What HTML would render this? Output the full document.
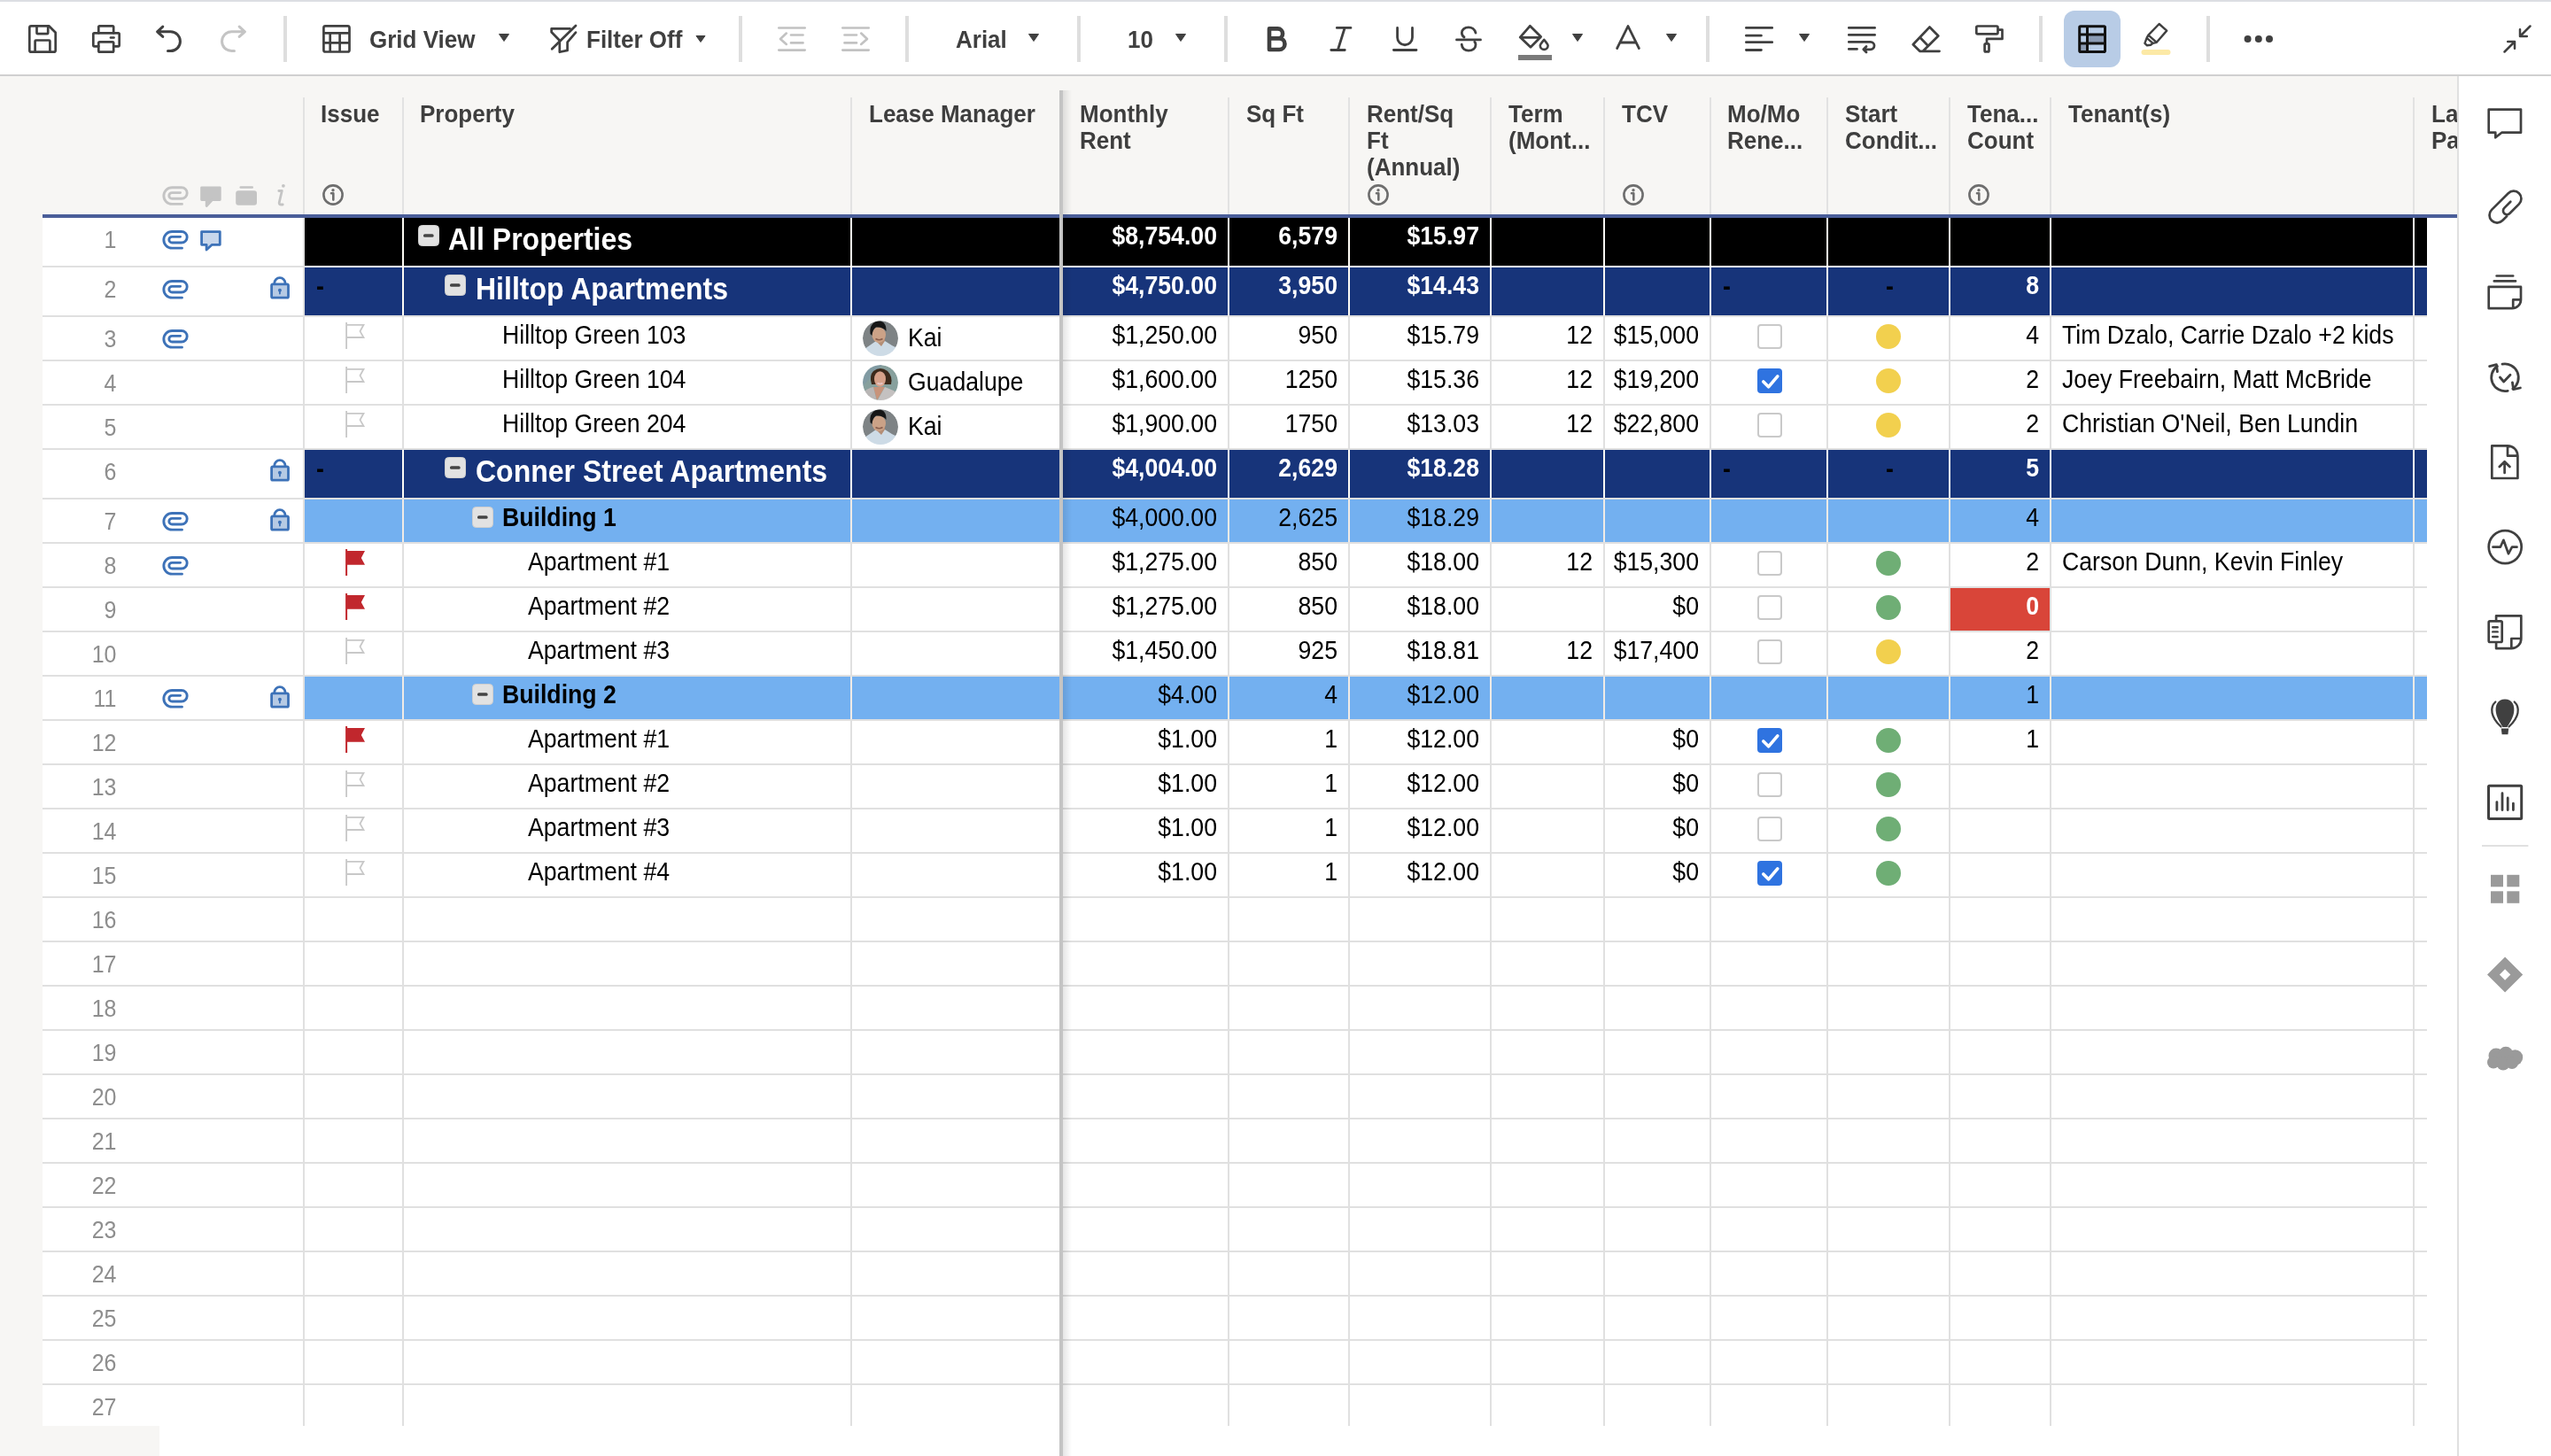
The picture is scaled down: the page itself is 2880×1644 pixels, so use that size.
<!DOCTYPE html>
<html><head><meta charset="utf-8"><style>
html,body{margin:0;padding:0;}
body{width:2880px;height:1644px;overflow:hidden;position:relative;background:#fff;font-family:"Liberation Sans", sans-serif;}
</style></head><body>
<div style="position:absolute;left:0px;top:0px;width:2880px;height:2px;background:#dcdee3;"></div><div style="position:absolute;left:0px;top:2px;width:2880px;height:82px;background:#ffffff;"></div><div style="position:absolute;left:0px;top:84px;width:2880px;height:2px;background:#d0d0d0;"></div><div style="position:absolute;left:0px;top:86px;width:2774px;height:156px;background:#f7f6f4;"></div><div style="position:absolute;left:0px;top:242px;width:48px;height:1402px;background:#f7f6f4;"></div><div style="position:absolute;left:0px;top:1610px;width:180px;height:34px;background:#f7f6f4;"></div><div style="position:absolute;left:2774px;top:86px;width:2px;height:1558px;background:#e0e0e0;"></div><div style="position:absolute;left:342px;top:110px;width:2px;height:132px;background:#e2e2e2;"></div><div style="position:absolute;left:454px;top:110px;width:2px;height:132px;background:#e2e2e2;"></div><div style="position:absolute;left:960px;top:110px;width:2px;height:132px;background:#e2e2e2;"></div><div style="position:absolute;left:1386px;top:110px;width:2px;height:132px;background:#e2e2e2;"></div><div style="position:absolute;left:1522px;top:110px;width:2px;height:132px;background:#e2e2e2;"></div><div style="position:absolute;left:1682px;top:110px;width:2px;height:132px;background:#e2e2e2;"></div><div style="position:absolute;left:1810px;top:110px;width:2px;height:132px;background:#e2e2e2;"></div><div style="position:absolute;left:1930px;top:110px;width:2px;height:132px;background:#e2e2e2;"></div><div style="position:absolute;left:2062px;top:110px;width:2px;height:132px;background:#e2e2e2;"></div><div style="position:absolute;left:2200px;top:110px;width:2px;height:132px;background:#e2e2e2;"></div><div style="position:absolute;left:2314px;top:110px;width:2px;height:132px;background:#e2e2e2;"></div><div style="position:absolute;left:2724px;top:110px;width:2px;height:132px;background:#e2e2e2;"></div><div style="position:absolute;left:48px;top:242px;width:2726px;height:4px;background:#4a5e99;"></div><div style="position:absolute;left:48px;top:246px;width:2692px;height:1364px;background:#ffffff;"></div><div style="position:absolute;left:48px;top:300px;width:2692px;height:2px;background:#e0e0e0;"></div><div style="position:absolute;left:48px;top:356px;width:2692px;height:2px;background:#e0e0e0;"></div><div style="position:absolute;left:48px;top:406px;width:2692px;height:2px;background:#e0e0e0;"></div><div style="position:absolute;left:48px;top:456px;width:2692px;height:2px;background:#e0e0e0;"></div><div style="position:absolute;left:48px;top:506px;width:2692px;height:2px;background:#e0e0e0;"></div><div style="position:absolute;left:48px;top:562px;width:2692px;height:2px;background:#e0e0e0;"></div><div style="position:absolute;left:48px;top:612px;width:2692px;height:2px;background:#e0e0e0;"></div><div style="position:absolute;left:48px;top:662px;width:2692px;height:2px;background:#e0e0e0;"></div><div style="position:absolute;left:48px;top:712px;width:2692px;height:2px;background:#e0e0e0;"></div><div style="position:absolute;left:48px;top:762px;width:2692px;height:2px;background:#e0e0e0;"></div><div style="position:absolute;left:48px;top:812px;width:2692px;height:2px;background:#e0e0e0;"></div><div style="position:absolute;left:48px;top:862px;width:2692px;height:2px;background:#e0e0e0;"></div><div style="position:absolute;left:48px;top:912px;width:2692px;height:2px;background:#e0e0e0;"></div><div style="position:absolute;left:48px;top:962px;width:2692px;height:2px;background:#e0e0e0;"></div><div style="position:absolute;left:48px;top:1012px;width:2692px;height:2px;background:#e0e0e0;"></div><div style="position:absolute;left:48px;top:1062px;width:2692px;height:2px;background:#e0e0e0;"></div><div style="position:absolute;left:48px;top:1112px;width:2692px;height:2px;background:#e0e0e0;"></div><div style="position:absolute;left:48px;top:1162px;width:2692px;height:2px;background:#e0e0e0;"></div><div style="position:absolute;left:48px;top:1212px;width:2692px;height:2px;background:#e0e0e0;"></div><div style="position:absolute;left:48px;top:1262px;width:2692px;height:2px;background:#e0e0e0;"></div><div style="position:absolute;left:48px;top:1312px;width:2692px;height:2px;background:#e0e0e0;"></div><div style="position:absolute;left:48px;top:1362px;width:2692px;height:2px;background:#e0e0e0;"></div><div style="position:absolute;left:48px;top:1412px;width:2692px;height:2px;background:#e0e0e0;"></div><div style="position:absolute;left:48px;top:1462px;width:2692px;height:2px;background:#e0e0e0;"></div><div style="position:absolute;left:48px;top:1512px;width:2692px;height:2px;background:#e0e0e0;"></div><div style="position:absolute;left:48px;top:1562px;width:2692px;height:2px;background:#e0e0e0;"></div><div style="position:absolute;left:342px;top:246px;width:2px;height:1364px;background:#e0e0e0;"></div><div style="position:absolute;left:454px;top:246px;width:2px;height:1364px;background:#e0e0e0;"></div><div style="position:absolute;left:960px;top:246px;width:2px;height:1364px;background:#e0e0e0;"></div><div style="position:absolute;left:1386px;top:246px;width:2px;height:1364px;background:#e0e0e0;"></div><div style="position:absolute;left:1522px;top:246px;width:2px;height:1364px;background:#e0e0e0;"></div><div style="position:absolute;left:1682px;top:246px;width:2px;height:1364px;background:#e0e0e0;"></div><div style="position:absolute;left:1810px;top:246px;width:2px;height:1364px;background:#e0e0e0;"></div><div style="position:absolute;left:1930px;top:246px;width:2px;height:1364px;background:#e0e0e0;"></div><div style="position:absolute;left:2062px;top:246px;width:2px;height:1364px;background:#e0e0e0;"></div><div style="position:absolute;left:2200px;top:246px;width:2px;height:1364px;background:#e0e0e0;"></div><div style="position:absolute;left:2314px;top:246px;width:2px;height:1364px;background:#e0e0e0;"></div><div style="position:absolute;left:2724px;top:246px;width:2px;height:1364px;background:#e0e0e0;"></div><div style="position:absolute;left:344px;top:246px;width:2396px;height:54px;background:#000000;"></div><div style="position:absolute;left:454px;top:246px;width:2px;height:54px;background:#fdfbf5;"></div><div style="position:absolute;left:960px;top:246px;width:2px;height:54px;background:#fdfbf5;"></div><div style="position:absolute;left:1386px;top:246px;width:2px;height:54px;background:#fdfbf5;"></div><div style="position:absolute;left:1522px;top:246px;width:2px;height:54px;background:#fdfbf5;"></div><div style="position:absolute;left:1682px;top:246px;width:2px;height:54px;background:#fdfbf5;"></div><div style="position:absolute;left:1810px;top:246px;width:2px;height:54px;background:#fdfbf5;"></div><div style="position:absolute;left:1930px;top:246px;width:2px;height:54px;background:#fdfbf5;"></div><div style="position:absolute;left:2062px;top:246px;width:2px;height:54px;background:#fdfbf5;"></div><div style="position:absolute;left:2200px;top:246px;width:2px;height:54px;background:#fdfbf5;"></div><div style="position:absolute;left:2314px;top:246px;width:2px;height:54px;background:#fdfbf5;"></div><div style="position:absolute;left:2724px;top:246px;width:2px;height:54px;background:#fdfbf5;"></div><div style="position:absolute;left:344px;top:302px;width:2396px;height:54px;background:#17347a;"></div><div style="position:absolute;left:454px;top:302px;width:2px;height:54px;background:#fdfbf5;"></div><div style="position:absolute;left:960px;top:302px;width:2px;height:54px;background:#fdfbf5;"></div><div style="position:absolute;left:1386px;top:302px;width:2px;height:54px;background:#fdfbf5;"></div><div style="position:absolute;left:1522px;top:302px;width:2px;height:54px;background:#fdfbf5;"></div><div style="position:absolute;left:1682px;top:302px;width:2px;height:54px;background:#fdfbf5;"></div><div style="position:absolute;left:1810px;top:302px;width:2px;height:54px;background:#fdfbf5;"></div><div style="position:absolute;left:1930px;top:302px;width:2px;height:54px;background:#fdfbf5;"></div><div style="position:absolute;left:2062px;top:302px;width:2px;height:54px;background:#fdfbf5;"></div><div style="position:absolute;left:2200px;top:302px;width:2px;height:54px;background:#fdfbf5;"></div><div style="position:absolute;left:2314px;top:302px;width:2px;height:54px;background:#fdfbf5;"></div><div style="position:absolute;left:2724px;top:302px;width:2px;height:54px;background:#fdfbf5;"></div><div style="position:absolute;left:344px;top:508px;width:2396px;height:54px;background:#17347a;"></div><div style="position:absolute;left:454px;top:508px;width:2px;height:54px;background:#fdfbf5;"></div><div style="position:absolute;left:960px;top:508px;width:2px;height:54px;background:#fdfbf5;"></div><div style="position:absolute;left:1386px;top:508px;width:2px;height:54px;background:#fdfbf5;"></div><div style="position:absolute;left:1522px;top:508px;width:2px;height:54px;background:#fdfbf5;"></div><div style="position:absolute;left:1682px;top:508px;width:2px;height:54px;background:#fdfbf5;"></div><div style="position:absolute;left:1810px;top:508px;width:2px;height:54px;background:#fdfbf5;"></div><div style="position:absolute;left:1930px;top:508px;width:2px;height:54px;background:#fdfbf5;"></div><div style="position:absolute;left:2062px;top:508px;width:2px;height:54px;background:#fdfbf5;"></div><div style="position:absolute;left:2200px;top:508px;width:2px;height:54px;background:#fdfbf5;"></div><div style="position:absolute;left:2314px;top:508px;width:2px;height:54px;background:#fdfbf5;"></div><div style="position:absolute;left:2724px;top:508px;width:2px;height:54px;background:#fdfbf5;"></div><div style="position:absolute;left:344px;top:564px;width:2396px;height:48px;background:#73b0f0;"></div><div style="position:absolute;left:454px;top:564px;width:2px;height:48px;background:#f1ebe6;"></div><div style="position:absolute;left:960px;top:564px;width:2px;height:48px;background:#f1ebe6;"></div><div style="position:absolute;left:1386px;top:564px;width:2px;height:48px;background:#f1ebe6;"></div><div style="position:absolute;left:1522px;top:564px;width:2px;height:48px;background:#f1ebe6;"></div><div style="position:absolute;left:1682px;top:564px;width:2px;height:48px;background:#f1ebe6;"></div><div style="position:absolute;left:1810px;top:564px;width:2px;height:48px;background:#f1ebe6;"></div><div style="position:absolute;left:1930px;top:564px;width:2px;height:48px;background:#f1ebe6;"></div><div style="position:absolute;left:2062px;top:564px;width:2px;height:48px;background:#f1ebe6;"></div><div style="position:absolute;left:2200px;top:564px;width:2px;height:48px;background:#f1ebe6;"></div><div style="position:absolute;left:2314px;top:564px;width:2px;height:48px;background:#f1ebe6;"></div><div style="position:absolute;left:2724px;top:564px;width:2px;height:48px;background:#f1ebe6;"></div><div style="position:absolute;left:344px;top:764px;width:2396px;height:48px;background:#73b0f0;"></div><div style="position:absolute;left:454px;top:764px;width:2px;height:48px;background:#f1ebe6;"></div><div style="position:absolute;left:960px;top:764px;width:2px;height:48px;background:#f1ebe6;"></div><div style="position:absolute;left:1386px;top:764px;width:2px;height:48px;background:#f1ebe6;"></div><div style="position:absolute;left:1522px;top:764px;width:2px;height:48px;background:#f1ebe6;"></div><div style="position:absolute;left:1682px;top:764px;width:2px;height:48px;background:#f1ebe6;"></div><div style="position:absolute;left:1810px;top:764px;width:2px;height:48px;background:#f1ebe6;"></div><div style="position:absolute;left:1930px;top:764px;width:2px;height:48px;background:#f1ebe6;"></div><div style="position:absolute;left:2062px;top:764px;width:2px;height:48px;background:#f1ebe6;"></div><div style="position:absolute;left:2200px;top:764px;width:2px;height:48px;background:#f1ebe6;"></div><div style="position:absolute;left:2314px;top:764px;width:2px;height:48px;background:#f1ebe6;"></div><div style="position:absolute;left:2724px;top:764px;width:2px;height:48px;background:#f1ebe6;"></div><div style="position:absolute;left:344px;top:300px;width:2396px;height:2px;background:#ffffff;"></div><div style="position:absolute;left:2202px;top:664px;width:112px;height:48px;background:#d94539;"></div><div style="position:absolute;left:1196px;top:102px;width:4px;height:1542px;background:#c4c4c4;"></div><div style="position:absolute;left:1200px;top:102px;width:10px;height:1542px;background:linear-gradient(to right, rgba(0,0,0,0.10), rgba(0,0,0,0));"></div><div style="position:absolute;left:417px;top:31.99px;font-size:26px;line-height:26px;color:#404040;font-weight:bold;white-space:nowrap;transform:scaleY(1.075);transform-origin:0 22.01px;">Grid View</div><div style="position:absolute;left:662px;top:31.99px;font-size:26px;line-height:26px;color:#404040;font-weight:bold;white-space:nowrap;transform:scaleY(1.075);transform-origin:0 22.01px;">Filter Off</div><div style="position:absolute;left:1079px;top:31.99px;font-size:26px;line-height:26px;color:#404040;font-weight:bold;white-space:nowrap;transform:scaleY(1.075);transform-origin:0 22.01px;">Arial</div><div style="position:absolute;left:1273px;top:31.99px;font-size:26px;line-height:26px;color:#404040;font-weight:bold;white-space:nowrap;transform:scaleY(1.075);transform-origin:0 22.01px;">10</div><div style="position:absolute;left:362px;top:115.99px;font-size:26px;line-height:26px;color:#3e3e3e;font-weight:bold;white-space:nowrap;transform:scaleY(1.075);transform-origin:0 22.01px;">Issue</div><div style="position:absolute;left:474px;top:115.99px;font-size:26px;line-height:26px;color:#3e3e3e;font-weight:bold;white-space:nowrap;transform:scaleY(1.075);transform-origin:0 22.01px;">Property</div><div style="position:absolute;left:981px;top:115.99px;font-size:26px;line-height:26px;color:#3e3e3e;font-weight:bold;white-space:nowrap;transform:scaleY(1.075);transform-origin:0 22.01px;">Lease Manager</div><div style="position:absolute;left:1219px;top:115.99px;font-size:26px;line-height:26px;color:#3e3e3e;font-weight:bold;white-space:nowrap;transform:scaleY(1.075);transform-origin:0 22.01px;">Monthly</div><div style="position:absolute;left:1219px;top:145.99px;font-size:26px;line-height:26px;color:#3e3e3e;font-weight:bold;white-space:nowrap;transform:scaleY(1.075);transform-origin:0 22.01px;">Rent</div><div style="position:absolute;left:1407px;top:115.99px;font-size:26px;line-height:26px;color:#3e3e3e;font-weight:bold;white-space:nowrap;transform:scaleY(1.075);transform-origin:0 22.01px;">Sq Ft</div><div style="position:absolute;left:1543px;top:115.99px;font-size:26px;line-height:26px;color:#3e3e3e;font-weight:bold;white-space:nowrap;transform:scaleY(1.075);transform-origin:0 22.01px;">Rent/Sq</div><div style="position:absolute;left:1543px;top:145.99px;font-size:26px;line-height:26px;color:#3e3e3e;font-weight:bold;white-space:nowrap;transform:scaleY(1.075);transform-origin:0 22.01px;">Ft</div><div style="position:absolute;left:1543px;top:175.99px;font-size:26px;line-height:26px;color:#3e3e3e;font-weight:bold;white-space:nowrap;transform:scaleY(1.075);transform-origin:0 22.01px;">(Annual)</div><div style="position:absolute;left:1703px;top:115.99px;font-size:26px;line-height:26px;color:#3e3e3e;font-weight:bold;white-space:nowrap;transform:scaleY(1.075);transform-origin:0 22.01px;">Term</div><div style="position:absolute;left:1703px;top:145.99px;font-size:26px;line-height:26px;color:#3e3e3e;font-weight:bold;white-space:nowrap;transform:scaleY(1.075);transform-origin:0 22.01px;">(Mont...</div><div style="position:absolute;left:1831px;top:115.99px;font-size:26px;line-height:26px;color:#3e3e3e;font-weight:bold;white-space:nowrap;transform:scaleY(1.075);transform-origin:0 22.01px;">TCV</div><div style="position:absolute;left:1950px;top:115.99px;font-size:26px;line-height:26px;color:#3e3e3e;font-weight:bold;white-space:nowrap;transform:scaleY(1.075);transform-origin:0 22.01px;">Mo/Mo</div><div style="position:absolute;left:1950px;top:145.99px;font-size:26px;line-height:26px;color:#3e3e3e;font-weight:bold;white-space:nowrap;transform:scaleY(1.075);transform-origin:0 22.01px;">Rene...</div><div style="position:absolute;left:2083px;top:115.99px;font-size:26px;line-height:26px;color:#3e3e3e;font-weight:bold;white-space:nowrap;transform:scaleY(1.075);transform-origin:0 22.01px;">Start</div><div style="position:absolute;left:2083px;top:145.99px;font-size:26px;line-height:26px;color:#3e3e3e;font-weight:bold;white-space:nowrap;transform:scaleY(1.075);transform-origin:0 22.01px;">Condit...</div><div style="position:absolute;left:2221px;top:115.99px;font-size:26px;line-height:26px;color:#3e3e3e;font-weight:bold;white-space:nowrap;transform:scaleY(1.075);transform-origin:0 22.01px;">Tena...</div><div style="position:absolute;left:2221px;top:145.99px;font-size:26px;line-height:26px;color:#3e3e3e;font-weight:bold;white-space:nowrap;transform:scaleY(1.075);transform-origin:0 22.01px;">Count</div><div style="position:absolute;left:2335px;top:115.99px;font-size:26px;line-height:26px;color:#3e3e3e;font-weight:bold;white-space:nowrap;transform:scaleY(1.075);transform-origin:0 22.01px;">Tenant(s)</div><div style="position:absolute;left:2726px;top:86px;width:48px;height:156px;overflow:hidden;"><div style="position:absolute;left:19px;top:29.99px;font-size:26px;line-height:26px;color:#3e3e3e;font-weight:bold;white-space:nowrap;transform:scaleY(1.075);transform-origin:0 22.01px;">La</div><div style="position:absolute;left:19px;top:59.99px;font-size:26px;line-height:26px;color:#3e3e3e;font-weight:bold;white-space:nowrap;transform:scaleY(1.075);transform-origin:0 22.01px;">Pa</div></div><div style="position:absolute;right:2748.5px;top:259.34px;font-size:25px;line-height:25px;color:#8e8e8e;font-weight:normal;white-space:nowrap;text-align:right;transform:scaleY(1.075);transform-origin:0 21.16px;">1</div><div style="position:absolute;right:2748.5px;top:315.34px;font-size:25px;line-height:25px;color:#8e8e8e;font-weight:normal;white-space:nowrap;text-align:right;transform:scaleY(1.075);transform-origin:0 21.16px;">2</div><div style="position:absolute;right:2748.5px;top:371.34px;font-size:25px;line-height:25px;color:#8e8e8e;font-weight:normal;white-space:nowrap;text-align:right;transform:scaleY(1.075);transform-origin:0 21.16px;">3</div><div style="position:absolute;right:2748.5px;top:421.34px;font-size:25px;line-height:25px;color:#8e8e8e;font-weight:normal;white-space:nowrap;text-align:right;transform:scaleY(1.075);transform-origin:0 21.16px;">4</div><div style="position:absolute;right:2748.5px;top:471.34px;font-size:25px;line-height:25px;color:#8e8e8e;font-weight:normal;white-space:nowrap;text-align:right;transform:scaleY(1.075);transform-origin:0 21.16px;">5</div><div style="position:absolute;right:2748.5px;top:521.34px;font-size:25px;line-height:25px;color:#8e8e8e;font-weight:normal;white-space:nowrap;text-align:right;transform:scaleY(1.075);transform-origin:0 21.16px;">6</div><div style="position:absolute;right:2748.5px;top:577.34px;font-size:25px;line-height:25px;color:#8e8e8e;font-weight:normal;white-space:nowrap;text-align:right;transform:scaleY(1.075);transform-origin:0 21.16px;">7</div><div style="position:absolute;right:2748.5px;top:627.34px;font-size:25px;line-height:25px;color:#8e8e8e;font-weight:normal;white-space:nowrap;text-align:right;transform:scaleY(1.075);transform-origin:0 21.16px;">8</div><div style="position:absolute;right:2748.5px;top:677.34px;font-size:25px;line-height:25px;color:#8e8e8e;font-weight:normal;white-space:nowrap;text-align:right;transform:scaleY(1.075);transform-origin:0 21.16px;">9</div><div style="position:absolute;right:2748.5px;top:727.34px;font-size:25px;line-height:25px;color:#8e8e8e;font-weight:normal;white-space:nowrap;text-align:right;transform:scaleY(1.075);transform-origin:0 21.16px;">10</div><div style="position:absolute;right:2748.5px;top:777.34px;font-size:25px;line-height:25px;color:#8e8e8e;font-weight:normal;white-space:nowrap;text-align:right;transform:scaleY(1.075);transform-origin:0 21.16px;">11</div><div style="position:absolute;right:2748.5px;top:827.34px;font-size:25px;line-height:25px;color:#8e8e8e;font-weight:normal;white-space:nowrap;text-align:right;transform:scaleY(1.075);transform-origin:0 21.16px;">12</div><div style="position:absolute;right:2748.5px;top:877.34px;font-size:25px;line-height:25px;color:#8e8e8e;font-weight:normal;white-space:nowrap;text-align:right;transform:scaleY(1.075);transform-origin:0 21.16px;">13</div><div style="position:absolute;right:2748.5px;top:927.34px;font-size:25px;line-height:25px;color:#8e8e8e;font-weight:normal;white-space:nowrap;text-align:right;transform:scaleY(1.075);transform-origin:0 21.16px;">14</div><div style="position:absolute;right:2748.5px;top:977.34px;font-size:25px;line-height:25px;color:#8e8e8e;font-weight:normal;white-space:nowrap;text-align:right;transform:scaleY(1.075);transform-origin:0 21.16px;">15</div><div style="position:absolute;right:2748.5px;top:1027.34px;font-size:25px;line-height:25px;color:#8e8e8e;font-weight:normal;white-space:nowrap;text-align:right;transform:scaleY(1.075);transform-origin:0 21.16px;">16</div><div style="position:absolute;right:2748.5px;top:1077.34px;font-size:25px;line-height:25px;color:#8e8e8e;font-weight:normal;white-space:nowrap;text-align:right;transform:scaleY(1.075);transform-origin:0 21.16px;">17</div><div style="position:absolute;right:2748.5px;top:1127.34px;font-size:25px;line-height:25px;color:#8e8e8e;font-weight:normal;white-space:nowrap;text-align:right;transform:scaleY(1.075);transform-origin:0 21.16px;">18</div><div style="position:absolute;right:2748.5px;top:1177.34px;font-size:25px;line-height:25px;color:#8e8e8e;font-weight:normal;white-space:nowrap;text-align:right;transform:scaleY(1.075);transform-origin:0 21.16px;">19</div><div style="position:absolute;right:2748.5px;top:1227.34px;font-size:25px;line-height:25px;color:#8e8e8e;font-weight:normal;white-space:nowrap;text-align:right;transform:scaleY(1.075);transform-origin:0 21.16px;">20</div><div style="position:absolute;right:2748.5px;top:1277.34px;font-size:25px;line-height:25px;color:#8e8e8e;font-weight:normal;white-space:nowrap;text-align:right;transform:scaleY(1.075);transform-origin:0 21.16px;">21</div><div style="position:absolute;right:2748.5px;top:1327.34px;font-size:25px;line-height:25px;color:#8e8e8e;font-weight:normal;white-space:nowrap;text-align:right;transform:scaleY(1.075);transform-origin:0 21.16px;">22</div><div style="position:absolute;right:2748.5px;top:1377.34px;font-size:25px;line-height:25px;color:#8e8e8e;font-weight:normal;white-space:nowrap;text-align:right;transform:scaleY(1.075);transform-origin:0 21.16px;">23</div><div style="position:absolute;right:2748.5px;top:1427.34px;font-size:25px;line-height:25px;color:#8e8e8e;font-weight:normal;white-space:nowrap;text-align:right;transform:scaleY(1.075);transform-origin:0 21.16px;">24</div><div style="position:absolute;right:2748.5px;top:1477.34px;font-size:25px;line-height:25px;color:#8e8e8e;font-weight:normal;white-space:nowrap;text-align:right;transform:scaleY(1.075);transform-origin:0 21.16px;">25</div><div style="position:absolute;right:2748.5px;top:1527.34px;font-size:25px;line-height:25px;color:#8e8e8e;font-weight:normal;white-space:nowrap;text-align:right;transform:scaleY(1.075);transform-origin:0 21.16px;">26</div><div style="position:absolute;right:2748.5px;top:1577.34px;font-size:25px;line-height:25px;color:#8e8e8e;font-weight:normal;white-space:nowrap;text-align:right;transform:scaleY(1.075);transform-origin:0 21.16px;">27</div><div style="position:absolute;left:506px;top:254.91px;font-size:32px;line-height:32px;color:#fff;font-weight:bold;white-space:nowrap;transform:scaleY(1.075);transform-origin:0 27.09px;">All Properties</div><div style="position:absolute;left:537px;top:310.91px;font-size:32px;line-height:32px;color:#fff;font-weight:bold;white-space:nowrap;transform:scaleY(1.075);transform-origin:0 27.09px;">Hilltop Apartments</div><div style="position:absolute;left:567px;top:366.42px;font-size:26.67px;line-height:26.67px;color:#000;font-weight:normal;white-space:nowrap;transform:scaleY(1.075);transform-origin:0 22.58px;">Hilltop Green 103</div><div style="position:absolute;left:567px;top:416.42px;font-size:26.67px;line-height:26.67px;color:#000;font-weight:normal;white-space:nowrap;transform:scaleY(1.075);transform-origin:0 22.58px;">Hilltop Green 104</div><div style="position:absolute;left:567px;top:466.42px;font-size:26.67px;line-height:26.67px;color:#000;font-weight:normal;white-space:nowrap;transform:scaleY(1.075);transform-origin:0 22.58px;">Hilltop Green 204</div><div style="position:absolute;left:537px;top:516.51px;font-size:32px;line-height:32px;color:#fff;font-weight:bold;white-space:nowrap;transform:scaleY(1.075);transform-origin:0 27.09px;">Conner Street Apartments</div><div style="position:absolute;left:567px;top:572.42px;font-size:26.67px;line-height:26.67px;color:#000;font-weight:bold;white-space:nowrap;transform:scaleY(1.075);transform-origin:0 22.58px;">Building 1</div><div style="position:absolute;left:596px;top:622.42px;font-size:26.67px;line-height:26.67px;color:#000;font-weight:normal;white-space:nowrap;transform:scaleY(1.075);transform-origin:0 22.58px;">Apartment #1</div><div style="position:absolute;left:596px;top:672.42px;font-size:26.67px;line-height:26.67px;color:#000;font-weight:normal;white-space:nowrap;transform:scaleY(1.075);transform-origin:0 22.58px;">Apartment #2</div><div style="position:absolute;left:596px;top:722.42px;font-size:26.67px;line-height:26.67px;color:#000;font-weight:normal;white-space:nowrap;transform:scaleY(1.075);transform-origin:0 22.58px;">Apartment #3</div><div style="position:absolute;left:567px;top:772.42px;font-size:26.67px;line-height:26.67px;color:#000;font-weight:bold;white-space:nowrap;transform:scaleY(1.075);transform-origin:0 22.58px;">Building 2</div><div style="position:absolute;left:596px;top:822.42px;font-size:26.67px;line-height:26.67px;color:#000;font-weight:normal;white-space:nowrap;transform:scaleY(1.075);transform-origin:0 22.58px;">Apartment #1</div><div style="position:absolute;left:596px;top:872.42px;font-size:26.67px;line-height:26.67px;color:#000;font-weight:normal;white-space:nowrap;transform:scaleY(1.075);transform-origin:0 22.58px;">Apartment #2</div><div style="position:absolute;left:596px;top:922.42px;font-size:26.67px;line-height:26.67px;color:#000;font-weight:normal;white-space:nowrap;transform:scaleY(1.075);transform-origin:0 22.58px;">Apartment #3</div><div style="position:absolute;left:596px;top:972.42px;font-size:26.67px;line-height:26.67px;color:#000;font-weight:normal;white-space:nowrap;transform:scaleY(1.075);transform-origin:0 22.58px;">Apartment #4</div><div style="position:absolute;left:1025px;top:368.82px;font-size:26.67px;line-height:26.67px;color:#000;font-weight:normal;white-space:nowrap;transform:scaleY(1.075);transform-origin:0 22.58px;">Kai</div><div style="position:absolute;left:1025px;top:418.82px;font-size:26.67px;line-height:26.67px;color:#000;font-weight:normal;white-space:nowrap;transform:scaleY(1.075);transform-origin:0 22.58px;">Guadalupe</div><div style="position:absolute;left:1025px;top:468.82px;font-size:26.67px;line-height:26.67px;color:#000;font-weight:normal;white-space:nowrap;transform:scaleY(1.075);transform-origin:0 22.58px;">Kai</div><div style="position:absolute;right:1506px;top:254.42px;font-size:26.67px;line-height:26.67px;color:#fff;font-weight:bold;white-space:nowrap;text-align:right;transform:scaleY(1.075);transform-origin:0 22.58px;">$8,754.00</div><div style="position:absolute;right:1370px;top:254.42px;font-size:26.67px;line-height:26.67px;color:#fff;font-weight:bold;white-space:nowrap;text-align:right;transform:scaleY(1.075);transform-origin:0 22.58px;">6,579</div><div style="position:absolute;right:1210px;top:254.42px;font-size:26.67px;line-height:26.67px;color:#fff;font-weight:bold;white-space:nowrap;text-align:right;transform:scaleY(1.075);transform-origin:0 22.58px;">$15.97</div><div style="position:absolute;right:1506px;top:310.42px;font-size:26.67px;line-height:26.67px;color:#fff;font-weight:bold;white-space:nowrap;text-align:right;transform:scaleY(1.075);transform-origin:0 22.58px;">$4,750.00</div><div style="position:absolute;right:1370px;top:310.42px;font-size:26.67px;line-height:26.67px;color:#fff;font-weight:bold;white-space:nowrap;text-align:right;transform:scaleY(1.075);transform-origin:0 22.58px;">3,950</div><div style="position:absolute;right:1210px;top:310.42px;font-size:26.67px;line-height:26.67px;color:#fff;font-weight:bold;white-space:nowrap;text-align:right;transform:scaleY(1.075);transform-origin:0 22.58px;">$14.43</div><div style="position:absolute;left:1945px;top:311.42px;font-size:26.67px;line-height:26.67px;color:#000;font-weight:bold;white-space:nowrap;transform:scaleY(1.075);transform-origin:0 22.58px;">-</div><div style="position:absolute;left:2129px;top:311.42px;font-size:26.67px;line-height:26.67px;color:#000;font-weight:bold;white-space:nowrap;transform:scaleY(1.075);transform-origin:0 22.58px;">-</div><div style="position:absolute;right:578px;top:310.42px;font-size:26.67px;line-height:26.67px;color:#fff;font-weight:bold;white-space:nowrap;text-align:right;transform:scaleY(1.075);transform-origin:0 22.58px;">8</div><div style="position:absolute;right:1506px;top:366.42px;font-size:26.67px;line-height:26.67px;color:#000;font-weight:normal;white-space:nowrap;text-align:right;transform:scaleY(1.075);transform-origin:0 22.58px;">$1,250.00</div><div style="position:absolute;right:1370px;top:366.42px;font-size:26.67px;line-height:26.67px;color:#000;font-weight:normal;white-space:nowrap;text-align:right;transform:scaleY(1.075);transform-origin:0 22.58px;">950</div><div style="position:absolute;right:1210px;top:366.42px;font-size:26.67px;line-height:26.67px;color:#000;font-weight:normal;white-space:nowrap;text-align:right;transform:scaleY(1.075);transform-origin:0 22.58px;">$15.79</div><div style="position:absolute;right:1082px;top:366.42px;font-size:26.67px;line-height:26.67px;color:#000;font-weight:normal;white-space:nowrap;text-align:right;transform:scaleY(1.075);transform-origin:0 22.58px;">12</div><div style="position:absolute;right:962px;top:366.42px;font-size:26.67px;line-height:26.67px;color:#000;font-weight:normal;white-space:nowrap;text-align:right;transform:scaleY(1.075);transform-origin:0 22.58px;">$15,000</div><div style="position:absolute;left:1984px;top:366.0px;width:28px;height:28px;background:#fff;box-sizing:border-box;border:2px solid #c9c9c9;border-radius:4px;"></div><div style="position:absolute;left:2118px;top:366.0px;width:28px;height:28px;border-radius:50%;background:#f2d04e;"></div><div style="position:absolute;right:578px;top:366.42px;font-size:26.67px;line-height:26.67px;color:#000;font-weight:normal;white-space:nowrap;text-align:right;transform:scaleY(1.075);transform-origin:0 22.58px;">4</div><div style="position:absolute;left:2328px;top:366.42px;font-size:26.67px;line-height:26.67px;color:#000;font-weight:normal;white-space:nowrap;transform:scaleY(1.075);transform-origin:0 22.58px;">Tim Dzalo, Carrie Dzalo +2 kids</div><div style="position:absolute;right:1506px;top:416.42px;font-size:26.67px;line-height:26.67px;color:#000;font-weight:normal;white-space:nowrap;text-align:right;transform:scaleY(1.075);transform-origin:0 22.58px;">$1,600.00</div><div style="position:absolute;right:1370px;top:416.42px;font-size:26.67px;line-height:26.67px;color:#000;font-weight:normal;white-space:nowrap;text-align:right;transform:scaleY(1.075);transform-origin:0 22.58px;">1250</div><div style="position:absolute;right:1210px;top:416.42px;font-size:26.67px;line-height:26.67px;color:#000;font-weight:normal;white-space:nowrap;text-align:right;transform:scaleY(1.075);transform-origin:0 22.58px;">$15.36</div><div style="position:absolute;right:1082px;top:416.42px;font-size:26.67px;line-height:26.67px;color:#000;font-weight:normal;white-space:nowrap;text-align:right;transform:scaleY(1.075);transform-origin:0 22.58px;">12</div><div style="position:absolute;right:962px;top:416.42px;font-size:26.67px;line-height:26.67px;color:#000;font-weight:normal;white-space:nowrap;text-align:right;transform:scaleY(1.075);transform-origin:0 22.58px;">$19,200</div><div style="position:absolute;left:1984px;top:416.0px;width:28px;height:28px;background:#2f73e0;border-radius:4px;"></div><svg style="position:absolute;left:1984px;top:416.0px;" width="28" height="28" viewBox="0 0 28 28"><path d="M6.8 15 L12.6 20.8 L22.8 8.8" fill="none" stroke="#fff" stroke-width="3.6" stroke-linecap="round" stroke-linejoin="round"/></svg><div style="position:absolute;left:2118px;top:416.0px;width:28px;height:28px;border-radius:50%;background:#f2d04e;"></div><div style="position:absolute;right:578px;top:416.42px;font-size:26.67px;line-height:26.67px;color:#000;font-weight:normal;white-space:nowrap;text-align:right;transform:scaleY(1.075);transform-origin:0 22.58px;">2</div><div style="position:absolute;left:2328px;top:416.42px;font-size:26.67px;line-height:26.67px;color:#000;font-weight:normal;white-space:nowrap;transform:scaleY(1.075);transform-origin:0 22.58px;">Joey Freebairn, Matt McBride</div><div style="position:absolute;right:1506px;top:466.42px;font-size:26.67px;line-height:26.67px;color:#000;font-weight:normal;white-space:nowrap;text-align:right;transform:scaleY(1.075);transform-origin:0 22.58px;">$1,900.00</div><div style="position:absolute;right:1370px;top:466.42px;font-size:26.67px;line-height:26.67px;color:#000;font-weight:normal;white-space:nowrap;text-align:right;transform:scaleY(1.075);transform-origin:0 22.58px;">1750</div><div style="position:absolute;right:1210px;top:466.42px;font-size:26.67px;line-height:26.67px;color:#000;font-weight:normal;white-space:nowrap;text-align:right;transform:scaleY(1.075);transform-origin:0 22.58px;">$13.03</div><div style="position:absolute;right:1082px;top:466.42px;font-size:26.67px;line-height:26.67px;color:#000;font-weight:normal;white-space:nowrap;text-align:right;transform:scaleY(1.075);transform-origin:0 22.58px;">12</div><div style="position:absolute;right:962px;top:466.42px;font-size:26.67px;line-height:26.67px;color:#000;font-weight:normal;white-space:nowrap;text-align:right;transform:scaleY(1.075);transform-origin:0 22.58px;">$22,800</div><div style="position:absolute;left:1984px;top:466.0px;width:28px;height:28px;background:#fff;box-sizing:border-box;border:2px solid #c9c9c9;border-radius:4px;"></div><div style="position:absolute;left:2118px;top:466.0px;width:28px;height:28px;border-radius:50%;background:#f2d04e;"></div><div style="position:absolute;right:578px;top:466.42px;font-size:26.67px;line-height:26.67px;color:#000;font-weight:normal;white-space:nowrap;text-align:right;transform:scaleY(1.075);transform-origin:0 22.58px;">2</div><div style="position:absolute;left:2328px;top:466.42px;font-size:26.67px;line-height:26.67px;color:#000;font-weight:normal;white-space:nowrap;transform:scaleY(1.075);transform-origin:0 22.58px;">Christian O'Neil, Ben Lundin</div><div style="position:absolute;right:1506px;top:516.42px;font-size:26.67px;line-height:26.67px;color:#fff;font-weight:bold;white-space:nowrap;text-align:right;transform:scaleY(1.075);transform-origin:0 22.58px;">$4,004.00</div><div style="position:absolute;right:1370px;top:516.42px;font-size:26.67px;line-height:26.67px;color:#fff;font-weight:bold;white-space:nowrap;text-align:right;transform:scaleY(1.075);transform-origin:0 22.58px;">2,629</div><div style="position:absolute;right:1210px;top:516.42px;font-size:26.67px;line-height:26.67px;color:#fff;font-weight:bold;white-space:nowrap;text-align:right;transform:scaleY(1.075);transform-origin:0 22.58px;">$18.28</div><div style="position:absolute;left:1945px;top:517.42px;font-size:26.67px;line-height:26.67px;color:#000;font-weight:bold;white-space:nowrap;transform:scaleY(1.075);transform-origin:0 22.58px;">-</div><div style="position:absolute;left:2129px;top:517.42px;font-size:26.67px;line-height:26.67px;color:#000;font-weight:bold;white-space:nowrap;transform:scaleY(1.075);transform-origin:0 22.58px;">-</div><div style="position:absolute;right:578px;top:516.42px;font-size:26.67px;line-height:26.67px;color:#fff;font-weight:bold;white-space:nowrap;text-align:right;transform:scaleY(1.075);transform-origin:0 22.58px;">5</div><div style="position:absolute;right:1506px;top:572.42px;font-size:26.67px;line-height:26.67px;color:#000;font-weight:normal;white-space:nowrap;text-align:right;transform:scaleY(1.075);transform-origin:0 22.58px;">$4,000.00</div><div style="position:absolute;right:1370px;top:572.42px;font-size:26.67px;line-height:26.67px;color:#000;font-weight:normal;white-space:nowrap;text-align:right;transform:scaleY(1.075);transform-origin:0 22.58px;">2,625</div><div style="position:absolute;right:1210px;top:572.42px;font-size:26.67px;line-height:26.67px;color:#000;font-weight:normal;white-space:nowrap;text-align:right;transform:scaleY(1.075);transform-origin:0 22.58px;">$18.29</div><div style="position:absolute;right:578px;top:572.42px;font-size:26.67px;line-height:26.67px;color:#000;font-weight:normal;white-space:nowrap;text-align:right;transform:scaleY(1.075);transform-origin:0 22.58px;">4</div><div style="position:absolute;right:1506px;top:622.42px;font-size:26.67px;line-height:26.67px;color:#000;font-weight:normal;white-space:nowrap;text-align:right;transform:scaleY(1.075);transform-origin:0 22.58px;">$1,275.00</div><div style="position:absolute;right:1370px;top:622.42px;font-size:26.67px;line-height:26.67px;color:#000;font-weight:normal;white-space:nowrap;text-align:right;transform:scaleY(1.075);transform-origin:0 22.58px;">850</div><div style="position:absolute;right:1210px;top:622.42px;font-size:26.67px;line-height:26.67px;color:#000;font-weight:normal;white-space:nowrap;text-align:right;transform:scaleY(1.075);transform-origin:0 22.58px;">$18.00</div><div style="position:absolute;right:1082px;top:622.42px;font-size:26.67px;line-height:26.67px;color:#000;font-weight:normal;white-space:nowrap;text-align:right;transform:scaleY(1.075);transform-origin:0 22.58px;">12</div><div style="position:absolute;right:962px;top:622.42px;font-size:26.67px;line-height:26.67px;color:#000;font-weight:normal;white-space:nowrap;text-align:right;transform:scaleY(1.075);transform-origin:0 22.58px;">$15,300</div><div style="position:absolute;left:1984px;top:622.0px;width:28px;height:28px;background:#fff;box-sizing:border-box;border:2px solid #c9c9c9;border-radius:4px;"></div><div style="position:absolute;left:2118px;top:622.0px;width:28px;height:28px;border-radius:50%;background:#6fae75;"></div><div style="position:absolute;right:578px;top:622.42px;font-size:26.67px;line-height:26.67px;color:#000;font-weight:normal;white-space:nowrap;text-align:right;transform:scaleY(1.075);transform-origin:0 22.58px;">2</div><div style="position:absolute;left:2328px;top:622.42px;font-size:26.67px;line-height:26.67px;color:#000;font-weight:normal;white-space:nowrap;transform:scaleY(1.075);transform-origin:0 22.58px;">Carson Dunn, Kevin Finley</div><div style="position:absolute;right:1506px;top:672.42px;font-size:26.67px;line-height:26.67px;color:#000;font-weight:normal;white-space:nowrap;text-align:right;transform:scaleY(1.075);transform-origin:0 22.58px;">$1,275.00</div><div style="position:absolute;right:1370px;top:672.42px;font-size:26.67px;line-height:26.67px;color:#000;font-weight:normal;white-space:nowrap;text-align:right;transform:scaleY(1.075);transform-origin:0 22.58px;">850</div><div style="position:absolute;right:1210px;top:672.42px;font-size:26.67px;line-height:26.67px;color:#000;font-weight:normal;white-space:nowrap;text-align:right;transform:scaleY(1.075);transform-origin:0 22.58px;">$18.00</div><div style="position:absolute;right:962px;top:672.42px;font-size:26.67px;line-height:26.67px;color:#000;font-weight:normal;white-space:nowrap;text-align:right;transform:scaleY(1.075);transform-origin:0 22.58px;">$0</div><div style="position:absolute;left:1984px;top:672.0px;width:28px;height:28px;background:#fff;box-sizing:border-box;border:2px solid #c9c9c9;border-radius:4px;"></div><div style="position:absolute;left:2118px;top:672.0px;width:28px;height:28px;border-radius:50%;background:#6fae75;"></div><div style="position:absolute;right:578px;top:672.42px;font-size:26.67px;line-height:26.67px;color:#fff;font-weight:bold;white-space:nowrap;text-align:right;transform:scaleY(1.075);transform-origin:0 22.58px;">0</div><div style="position:absolute;right:1506px;top:722.42px;font-size:26.67px;line-height:26.67px;color:#000;font-weight:normal;white-space:nowrap;text-align:right;transform:scaleY(1.075);transform-origin:0 22.58px;">$1,450.00</div><div style="position:absolute;right:1370px;top:722.42px;font-size:26.67px;line-height:26.67px;color:#000;font-weight:normal;white-space:nowrap;text-align:right;transform:scaleY(1.075);transform-origin:0 22.58px;">925</div><div style="position:absolute;right:1210px;top:722.42px;font-size:26.67px;line-height:26.67px;color:#000;font-weight:normal;white-space:nowrap;text-align:right;transform:scaleY(1.075);transform-origin:0 22.58px;">$18.81</div><div style="position:absolute;right:1082px;top:722.42px;font-size:26.67px;line-height:26.67px;color:#000;font-weight:normal;white-space:nowrap;text-align:right;transform:scaleY(1.075);transform-origin:0 22.58px;">12</div><div style="position:absolute;right:962px;top:722.42px;font-size:26.67px;line-height:26.67px;color:#000;font-weight:normal;white-space:nowrap;text-align:right;transform:scaleY(1.075);transform-origin:0 22.58px;">$17,400</div><div style="position:absolute;left:1984px;top:722.0px;width:28px;height:28px;background:#fff;box-sizing:border-box;border:2px solid #c9c9c9;border-radius:4px;"></div><div style="position:absolute;left:2118px;top:722.0px;width:28px;height:28px;border-radius:50%;background:#f2d04e;"></div><div style="position:absolute;right:578px;top:722.42px;font-size:26.67px;line-height:26.67px;color:#000;font-weight:normal;white-space:nowrap;text-align:right;transform:scaleY(1.075);transform-origin:0 22.58px;">2</div><div style="position:absolute;right:1506px;top:772.42px;font-size:26.67px;line-height:26.67px;color:#000;font-weight:normal;white-space:nowrap;text-align:right;transform:scaleY(1.075);transform-origin:0 22.58px;">$4.00</div><div style="position:absolute;right:1370px;top:772.42px;font-size:26.67px;line-height:26.67px;color:#000;font-weight:normal;white-space:nowrap;text-align:right;transform:scaleY(1.075);transform-origin:0 22.58px;">4</div><div style="position:absolute;right:1210px;top:772.42px;font-size:26.67px;line-height:26.67px;color:#000;font-weight:normal;white-space:nowrap;text-align:right;transform:scaleY(1.075);transform-origin:0 22.58px;">$12.00</div><div style="position:absolute;right:578px;top:772.42px;font-size:26.67px;line-height:26.67px;color:#000;font-weight:normal;white-space:nowrap;text-align:right;transform:scaleY(1.075);transform-origin:0 22.58px;">1</div><div style="position:absolute;right:1506px;top:822.42px;font-size:26.67px;line-height:26.67px;color:#000;font-weight:normal;white-space:nowrap;text-align:right;transform:scaleY(1.075);transform-origin:0 22.58px;">$1.00</div><div style="position:absolute;right:1370px;top:822.42px;font-size:26.67px;line-height:26.67px;color:#000;font-weight:normal;white-space:nowrap;text-align:right;transform:scaleY(1.075);transform-origin:0 22.58px;">1</div><div style="position:absolute;right:1210px;top:822.42px;font-size:26.67px;line-height:26.67px;color:#000;font-weight:normal;white-space:nowrap;text-align:right;transform:scaleY(1.075);transform-origin:0 22.58px;">$12.00</div><div style="position:absolute;right:962px;top:822.42px;font-size:26.67px;line-height:26.67px;color:#000;font-weight:normal;white-space:nowrap;text-align:right;transform:scaleY(1.075);transform-origin:0 22.58px;">$0</div><div style="position:absolute;left:1984px;top:822.0px;width:28px;height:28px;background:#2f73e0;border-radius:4px;"></div><svg style="position:absolute;left:1984px;top:822.0px;" width="28" height="28" viewBox="0 0 28 28"><path d="M6.8 15 L12.6 20.8 L22.8 8.8" fill="none" stroke="#fff" stroke-width="3.6" stroke-linecap="round" stroke-linejoin="round"/></svg><div style="position:absolute;left:2118px;top:822.0px;width:28px;height:28px;border-radius:50%;background:#6fae75;"></div><div style="position:absolute;right:578px;top:822.42px;font-size:26.67px;line-height:26.67px;color:#000;font-weight:normal;white-space:nowrap;text-align:right;transform:scaleY(1.075);transform-origin:0 22.58px;">1</div><div style="position:absolute;right:1506px;top:872.42px;font-size:26.67px;line-height:26.67px;color:#000;font-weight:normal;white-space:nowrap;text-align:right;transform:scaleY(1.075);transform-origin:0 22.58px;">$1.00</div><div style="position:absolute;right:1370px;top:872.42px;font-size:26.67px;line-height:26.67px;color:#000;font-weight:normal;white-space:nowrap;text-align:right;transform:scaleY(1.075);transform-origin:0 22.58px;">1</div><div style="position:absolute;right:1210px;top:872.42px;font-size:26.67px;line-height:26.67px;color:#000;font-weight:normal;white-space:nowrap;text-align:right;transform:scaleY(1.075);transform-origin:0 22.58px;">$12.00</div><div style="position:absolute;right:962px;top:872.42px;font-size:26.67px;line-height:26.67px;color:#000;font-weight:normal;white-space:nowrap;text-align:right;transform:scaleY(1.075);transform-origin:0 22.58px;">$0</div><div style="position:absolute;left:1984px;top:872.0px;width:28px;height:28px;background:#fff;box-sizing:border-box;border:2px solid #c9c9c9;border-radius:4px;"></div><div style="position:absolute;left:2118px;top:872.0px;width:28px;height:28px;border-radius:50%;background:#6fae75;"></div><div style="position:absolute;right:1506px;top:922.42px;font-size:26.67px;line-height:26.67px;color:#000;font-weight:normal;white-space:nowrap;text-align:right;transform:scaleY(1.075);transform-origin:0 22.58px;">$1.00</div><div style="position:absolute;right:1370px;top:922.42px;font-size:26.67px;line-height:26.67px;color:#000;font-weight:normal;white-space:nowrap;text-align:right;transform:scaleY(1.075);transform-origin:0 22.58px;">1</div><div style="position:absolute;right:1210px;top:922.42px;font-size:26.67px;line-height:26.67px;color:#000;font-weight:normal;white-space:nowrap;text-align:right;transform:scaleY(1.075);transform-origin:0 22.58px;">$12.00</div><div style="position:absolute;right:962px;top:922.42px;font-size:26.67px;line-height:26.67px;color:#000;font-weight:normal;white-space:nowrap;text-align:right;transform:scaleY(1.075);transform-origin:0 22.58px;">$0</div><div style="position:absolute;left:1984px;top:922.0px;width:28px;height:28px;background:#fff;box-sizing:border-box;border:2px solid #c9c9c9;border-radius:4px;"></div><div style="position:absolute;left:2118px;top:922.0px;width:28px;height:28px;border-radius:50%;background:#6fae75;"></div><div style="position:absolute;right:1506px;top:972.42px;font-size:26.67px;line-height:26.67px;color:#000;font-weight:normal;white-space:nowrap;text-align:right;transform:scaleY(1.075);transform-origin:0 22.58px;">$1.00</div><div style="position:absolute;right:1370px;top:972.42px;font-size:26.67px;line-height:26.67px;color:#000;font-weight:normal;white-space:nowrap;text-align:right;transform:scaleY(1.075);transform-origin:0 22.58px;">1</div><div style="position:absolute;right:1210px;top:972.42px;font-size:26.67px;line-height:26.67px;color:#000;font-weight:normal;white-space:nowrap;text-align:right;transform:scaleY(1.075);transform-origin:0 22.58px;">$12.00</div><div style="position:absolute;right:962px;top:972.42px;font-size:26.67px;line-height:26.67px;color:#000;font-weight:normal;white-space:nowrap;text-align:right;transform:scaleY(1.075);transform-origin:0 22.58px;">$0</div><div style="position:absolute;left:1984px;top:972.0px;width:28px;height:28px;background:#2f73e0;border-radius:4px;"></div><svg style="position:absolute;left:1984px;top:972.0px;" width="28" height="28" viewBox="0 0 28 28"><path d="M6.8 15 L12.6 20.8 L22.8 8.8" fill="none" stroke="#fff" stroke-width="3.6" stroke-linecap="round" stroke-linejoin="round"/></svg><div style="position:absolute;left:2118px;top:972.0px;width:28px;height:28px;border-radius:50%;background:#6fae75;"></div><div style="position:absolute;left:357px;top:311.42px;font-size:26.67px;line-height:26.67px;color:#000;font-weight:bold;white-space:nowrap;transform:scaleY(1.075);transform-origin:0 22.58px;">-</div><div style="position:absolute;left:357px;top:517.42px;font-size:26.67px;line-height:26.67px;color:#000;font-weight:bold;white-space:nowrap;transform:scaleY(1.075);transform-origin:0 22.58px;">-</div><svg style="position:absolute;left:0;top:0;pointer-events:none" width="2880" height="1644" viewBox="0 0 2880 1644"><path d="M33.3 31.3 Q33.3 29.3 35.3 29.3 H55.2 L62.7 36.8 V56.7 Q62.7 58.7 60.7 58.7 H35.3 Q33.3 58.7 33.3 56.7 Z" fill="none" stroke="#404040" stroke-width="2.7" stroke-linecap="round" stroke-linejoin="round" /><path d="M41.5 29.5 V37.2 Q41.5 38.2 42.5 38.2 H53.2 Q54.2 38.2 54.2 37.2 V29.5" fill="none" stroke="#404040" stroke-width="2.7" stroke-linecap="round" stroke-linejoin="round" /><path d="M39.6 58.5 V46.5 Q39.6 45.5 40.6 45.5 H55.4 Q56.4 45.5 56.4 46.5 V58.5" fill="none" stroke="#404040" stroke-width="2.7" stroke-linecap="round" stroke-linejoin="round" /><path d="M111.3 37.3 V30.5 Q111.3 29.3 112.5 29.3 H127 Q128.2 29.3 128.2 30.5 V37.3" fill="none" stroke="#404040" stroke-width="2.7" stroke-linecap="round" stroke-linejoin="round" /><path d="M111.3 52.3 H106.5 Q105.3 52.3 105.3 51.1 V38.5 Q105.3 37.3 106.5 37.3 H133.5 Q134.7 37.3 134.7 38.5 V51.1 Q134.7 52.3 133.5 52.3 H128.2" fill="none" stroke="#404040" stroke-width="2.7" stroke-linecap="round" stroke-linejoin="round" /><rect x="111.3" y="47.3" width="16.9" height="11.4" rx="1.2" fill="none" stroke="#404040" stroke-width="2.7"/><path d="M125 42.5 H128.5" fill="none" stroke="#404040" stroke-width="2.7" stroke-linecap="round" stroke-linejoin="round" /><path d="M183.8 30.1 L177.6 35.8 L183.8 41.4 M177.6 35.8 H192.6 A10.85 10.85 0 0 1 192.6 57.5 H189.5" fill="none" stroke="#404040" stroke-width="3" stroke-linecap="round" stroke-linejoin="round" /><g transform="translate(454 0) scale(-1 1)"><path d="M183.8 30.1 L177.6 35.8 L183.8 41.4 M177.6 35.8 H192.6 A10.85 10.85 0 0 1 192.6 57.5 H189.5" fill="none" stroke="#c4c4c4" stroke-width="3" stroke-linecap="round" stroke-linejoin="round" /></g><rect x="320" y="18" width="4" height="52" fill="#dedede"/><rect x="834" y="18" width="4" height="52" fill="#dedede"/><rect x="1022" y="18" width="4" height="52" fill="#dedede"/><rect x="1216" y="18" width="4" height="52" fill="#dedede"/><rect x="1382" y="18" width="4" height="52" fill="#dedede"/><rect x="1926" y="18" width="4" height="52" fill="#dedede"/><rect x="2302" y="18" width="4" height="52" fill="#dedede"/><rect x="2491" y="18" width="4" height="52" fill="#dedede"/><path d="M367.4 29.4 H392.5 Q394.5 29.4 394.5 31.4 V56.5 Q394.5 58.5 392.5 58.5 H367.4 Q365.4 58.5 365.4 56.5 V31.4 Q365.4 29.4 367.4 29.4 Z M365.4 37.3 H394.5 M365.4 48.3 H394.5 M372.7 37.3 V58.5 M383.6 37.3 V58.5" fill="none" stroke="#404040" stroke-width="2.7" stroke-linecap="round" stroke-linejoin="round" /><path d="M563.5 38.5 H574.5 L569.0 46.5 Z" fill="#404040" stroke="#404040" stroke-width="1" stroke-linejoin="round"/><path d="M786 40.5 H796 L791.0 47.5 Z" fill="#404040" stroke="#404040" stroke-width="1" stroke-linejoin="round"/><path d="M1161.5 38.5 H1172.5 L1167.0 46.5 Z" fill="#404040" stroke="#404040" stroke-width="1" stroke-linejoin="round"/><path d="M1327.5 38.5 H1338.5 L1333.0 46.5 Z" fill="#404040" stroke="#404040" stroke-width="1" stroke-linejoin="round"/><path d="M1775.5 38.5 H1786.5 L1781.0 46.5 Z" fill="#404040" stroke="#404040" stroke-width="1" stroke-linejoin="round"/><path d="M1881.5 38.5 H1892.5 L1887.0 46.5 Z" fill="#404040" stroke="#404040" stroke-width="1" stroke-linejoin="round"/><path d="M2031.5 38.5 H2042.5 L2037.0 46.5 Z" fill="#404040" stroke="#404040" stroke-width="1" stroke-linejoin="round"/><path d="M643.5 32.4 H622.6 V36.2 L631.8 45.8 V58.8 L640.6 56.9 V47.7 L650 36.6" fill="none" stroke="#404040" stroke-width="2.7" stroke-linecap="round" stroke-linejoin="round" /><path d="M623.2 55.2 L650 29" fill="none" stroke="#404040" stroke-width="2.8" stroke-linecap="round" stroke-linejoin="round" /><path d="M879.3 31.5 H908.7 M893 39.5 H906.5 M893 48.4 H906.5 M879.3 56.6 H908.7 M887.8 37.6 L881 43.9 L887.8 49.9" fill="none" stroke="#c2c2c2" stroke-width="2.7" stroke-linecap="round" stroke-linejoin="round" /><path d="M951.3 31.5 H980.7 M953.5 39.5 H967 M953.5 48.4 H967 M951.3 56.6 H980.7 M972.2 37.6 L979 43.9 L972.2 49.9" fill="none" stroke="#c2c2c2" stroke-width="2.7" stroke-linecap="round" stroke-linejoin="round" /><path d="M1433 32.4 H1442.6 A5.5 5.5 0 0 1 1442.6 43.4 H1433 Z M1433 43.4 H1444.2 A6.3 6.3 0 0 1 1444.2 56 H1433 Z" fill="none" stroke="#404040" stroke-width="4.6" stroke-linecap="round" stroke-linejoin="round" /><path d="M1509.3 31.4 H1525 M1502.8 56.5 H1518.3 M1518 32 L1510.5 56" fill="none" stroke="#404040" stroke-width="2.8" stroke-linecap="round" stroke-linejoin="round" /><path d="M1577.6 31.4 V42.3 A8.45 8.45 0 0 0 1594.5 42.3 V31.4 M1573.4 56.5 H1599" fill="none" stroke="#404040" stroke-width="2.8" stroke-linecap="round" stroke-linejoin="round" /><path d="M1644.5 44.9 H1671.5" fill="none" stroke="#404040" stroke-width="2.8" stroke-linecap="round" stroke-linejoin="round" /><path d="M1666 37.2 C1665 33 1661.5 30.8 1658 30.8 C1653.5 30.8 1650.3 33.5 1650.3 37 C1650.3 39.5 1651.5 41 1653 42" fill="none" stroke="#404040" stroke-width="2.8" stroke-linecap="round" stroke-linejoin="round" /><path d="M1650.2 50.2 C1650.5 54.8 1654 57.2 1658 57.2 C1662.5 57.2 1666 54.5 1666 50.5 C1666 49 1665.5 48 1664.8 47.3" fill="none" stroke="#404040" stroke-width="2.8" stroke-linecap="round" stroke-linejoin="round" /><path d="M1727.3 29.3 L1739.6 41.6 L1728 53.2 L1716.2 42.1 Z M1716.6 42.4 H1739" fill="none" stroke="#404040" stroke-width="2.8" stroke-linecap="round" stroke-linejoin="round" /><path d="M1743.2 44.8 Q1747.6 50 1747.6 51.5 A4.4 4.4 0 0 1 1738.8 51.5 Q1738.8 50 1743.2 44.8 Z" fill="none" stroke="#404040" stroke-width="2.6" stroke-linejoin="round"/><rect x="1714" y="62" width="38" height="6" fill="#7a7a7a"/><path d="M1825.6 54.6 L1838 29.5 L1850.4 54.6 M1829.8 48 H1846" fill="none" stroke="#404040" stroke-width="2.8" stroke-linecap="round" stroke-linejoin="round" /><path d="M1971.4 31.4 H2000.7 M1971.4 40.2 H1988.4 M1971.4 47.7 H2000.7 M1971.4 56.5 H1988.4" fill="none" stroke="#404040" stroke-width="2.8" stroke-linecap="round" stroke-linejoin="round" /><path d="M2087.3 31.4 H2116.6 M2087.3 39.4 H2116.6 M2087.3 47.4 H2111.8 A4.2 4.2 0 0 1 2111.8 55.8 H2104 M2107 52.6 L2103.8 55.8 L2107 59 M2087.3 55.4 H2096.5" fill="none" stroke="#404040" stroke-width="2.8" stroke-linecap="round" stroke-linejoin="round" /><path d="M2178.4 30.6 L2188.3 40.5 L2171 57.8 H2167.4 L2159.8 50.3 Z M2167.8 42.6 L2176 50.9 M2171 57.8 H2189.5" fill="none" stroke="#404040" stroke-width="2.8" stroke-linecap="round" stroke-linejoin="round" /><rect x="2231.3" y="29.5" width="24.2" height="8.8" rx="1.5" fill="none" stroke="#404040" stroke-width="2.7"/><path d="M2256 33.6 H2260.5 V43.9 H2243 V48.5" fill="none" stroke="#404040" stroke-width="2.7" stroke-linecap="round" stroke-linejoin="round" /><rect x="2240.6" y="49.4" width="4.9" height="9" rx="1.2" fill="none" stroke="#404040" stroke-width="2.7"/><rect x="2330" y="12" width="64" height="64" rx="12" fill="#b8cce6"/><rect x="2348" y="40" width="8.5" height="9" fill="#b8cce6"/><rect x="2357" y="39.5" width="19.5" height="9.5" fill="#8b9bb4"/><rect x="2347.5" y="49" width="9" height="9.5" fill="#8b9bb4"/><path d="M2349 29.7 H2375.3 Q2376.5 29.7 2376.5 31 V57.3 Q2376.5 58.6 2375.3 58.6 H2349 Q2347.7 58.6 2347.7 57.3 V31 Q2347.7 29.7 2349 29.7 Z M2347.7 39 H2376.5 M2347.7 49 H2376.5 M2356.5 29.7 V58.6" fill="none" stroke="#111" stroke-width="3" stroke-linecap="round" stroke-linejoin="round" /><path d="M2437.6 27 L2446.2 34.6 L2434.8 47.8 L2425.4 39.6 Z M2425.4 39.6 L2423.6 42.8 L2430.6 48.8 L2434.8 47.8 M2423.6 42.8 L2421.4 48.8 L2424 51.3 L2428 50.8 L2430.6 48.8" fill="none" stroke="#404040" stroke-width="2.4" stroke-linecap="round" stroke-linejoin="round" /><rect x="2417.5" y="56" width="33" height="6" rx="3" fill="#fce9a6"/><circle cx="2537.6" cy="44" r="4" fill="#404040"/><circle cx="2549.8" cy="44" r="4" fill="#404040"/><circle cx="2562" cy="44" r="4" fill="#404040"/><path d="M2856.5 29.5 L2845 41 M2845 33.2 V41 H2852.8 M2827.5 58.5 L2839 47 M2831.2 47 H2839 V54.8" fill="none" stroke="#404040" stroke-width="2.5" stroke-linecap="round" stroke-linejoin="round" /><path d="M2809.7 123.6 H2846 V149.7 H2824.3 L2817.3 155.3 V149.7 H2809.7 Z" fill="none" stroke="#404040" stroke-width="2.7" stroke-linecap="round" stroke-linejoin="round" /><g transform="translate(2828.3 233.8) rotate(-45)"><path d="M-6 8.6 H-13 A8.6 8.6 0 0 1 -13 -8.6 H13.5 A8.6 8.6 0 0 1 13.5 8.6 H-1.5 A4.3 4.3 0 0 1 -1.5 0 H8.5" fill="none" stroke="#404040" stroke-width="2.7" stroke-linecap="round" stroke-linejoin="round" /></g><path d="M2818.6 311.5 H2837.2 M2815.8 317.4 H2840 M2809.7 323.9 H2846 V338.4 A10 10 0 0 1 2836 348.2 H2809.7 Z M2837.2 348 V338.4 H2846" fill="none" stroke="#404040" stroke-width="2.7" stroke-linecap="round" stroke-linejoin="round" /><path d="M2819.4 413.5 A15.4 15.4 0 0 0 2831.2 441.3" fill="none" stroke="#404040" stroke-width="2.8" stroke-linecap="round" stroke-linejoin="round" /><path d="M2825 411.2 A15.4 15.4 0 0 1 2836.8 438.9" fill="none" stroke="#404040" stroke-width="2.8" stroke-linecap="round" stroke-linejoin="round" /><path d="M2810.6 413.6 L2818.4 411.6 L2819.5 419.7 M2836.4 431.8 L2837.6 439.6 L2845.4 438" fill="none" stroke="#404040" stroke-width="2.8" stroke-linecap="round" stroke-linejoin="round" /><path d="M2822.4 426 L2826.7 431 L2834 423.2" fill="none" stroke="#404040" stroke-width="2.8" stroke-linecap="round" stroke-linejoin="round" /><path d="M2813.3 503.3 H2831 A11.4 11.4 0 0 1 2842.4 514.7 V540 H2813.3 Z M2831 503.3 V514.7 H2842.4 M2827.6 534 V521.5 M2821.8 527 L2827.6 521.3 L2833.4 527" fill="none" stroke="#404040" stroke-width="2.7" stroke-linecap="round" stroke-linejoin="round" /><circle cx="2828.2" cy="617.6" r="18.5" fill="none" stroke="#404040" stroke-width="2.7"/><path d="M2814.5 617.7 H2822.8 L2826.4 609.8 L2832 625.2 L2836 617.7 H2841.5" fill="none" stroke="#404040" stroke-width="2.7" stroke-linecap="round" stroke-linejoin="round" /><path d="M2818.1 701 V695.3 H2846.3 V721 A11 11 0 0 1 2835.3 732.2 H2818.1 V725.5 M2835.3 732 V721 H2846.3" fill="none" stroke="#404040" stroke-width="2.7" stroke-linecap="round" stroke-linejoin="round" /><rect x="2809.7" y="701.3" width="15" height="23.7" rx="1.5" fill="none" stroke="#404040" stroke-width="2.7"/><path d="M2814.2 708.3 H2819.7 M2814.2 713.4 H2819.7 M2814.2 719 H2819.7" fill="none" stroke="#404040" stroke-width="2.4" stroke-linecap="round" stroke-linejoin="round" /><path d="M2828 789.5 C2819.5 789.5 2816.5 797 2818 805 C2819.2 811.5 2823.5 817.5 2825.5 821 H2830.5 C2832.5 817.5 2836.8 811.5 2838 805 C2839.5 797 2836.5 789.5 2828 789.5 Z" fill="#404040"/><path d="M2817.3 792.5 C2810.5 799 2812 810 2823.5 820.5 M2838.7 792.5 C2845.5 799 2844 810 2832.5 820.5" fill="none" stroke="#404040" stroke-width="2.3" stroke-linecap="round" stroke-linejoin="round" /><path d="M2823.8 822.5 H2832.2 L2831.4 829.3 H2824.6 Z" fill="#404040"/><rect x="2809.5" y="887.3" width="37.2" height="37.2" rx="1" fill="none" stroke="#404040" stroke-width="3"/><path d="M2818.9 905.6 V914.5 M2825 895.7 V914.5 M2831.2 900.9 V914.5 M2837.4 907.2 V914.5" fill="none" stroke="#404040" stroke-width="2.8" stroke-linecap="round" stroke-linejoin="round" /><rect x="2802" y="954" width="52.4" height="2" fill="#e0e0e0"/><rect x="2812" y="987.8" width="14" height="13.5" fill="#9a9a9a"/><rect x="2812" y="1006.3" width="14" height="13.5" fill="#9a9a9a"/><rect x="2830.3" y="987.8" width="14" height="13.5" fill="#9a9a9a"/><rect x="2830.3" y="1006.3" width="14" height="13.5" fill="#9a9a9a"/><path d="M2828.1 1080.4 L2848.2 1100.5 L2828.1 1120.6 L2808 1100.5 Z M2828.1 1094.3 L2821.9 1100.5 L2828.1 1106.7 L2834.3 1100.5 Z" fill="#9a9a9a" fill-rule="evenodd"/><g fill="#9a9a9a"><circle cx="2818" cy="1192" r="8.5"/><circle cx="2829" cy="1190" r="8.2"/><circle cx="2839.5" cy="1194" r="8.7"/><circle cx="2815" cy="1199.5" r="7"/><circle cx="2826" cy="1201" r="7.5"/><circle cx="2836" cy="1200" r="7"/></g><g transform="translate(0 -50)"><path d="M29.5 28.4 H18.2 A9.35 9.35 0 0 1 18.2 9.7 H28.9 A6.3 6.3 0 0 1 28.9 22.3 H18.2 A3.35 3.35 0 0 1 18.2 15.6 H27.6" fill="none" stroke="#c4c4c4" stroke-width="2.9" stroke-linecap="round" stroke-linejoin="round" transform="translate(176 252)"/></g><path d="M227.6 211.8 H248.3 V225.5 H239.6 L233.2 232.5 V225.5 H227.6 Z" fill="#c4c4c4" stroke="#c4c4c4" stroke-width="2.8" stroke-linejoin="round"/><rect x="266.2" y="215.2" width="23.8" height="16.6" rx="3" fill="#c4c4c4"/><rect x="270.5" y="210.3" width="15.5" height="2.5" rx="1.2" fill="#c4c4c4"/><circle cx="319.9" cy="209.8" r="1.9" fill="#c4c4c4"/><path d="M314.8 215.5 H318.3 L315.2 228.8 Q315 231 317.4 231 H319.2" fill="none" stroke="#c4c4c4" stroke-width="2.8" stroke-linecap="round" stroke-linejoin="round" /><circle cx="376" cy="220" r="10.6" fill="none" stroke="#6e6e6e" stroke-width="2.6"/><circle cx="376" cy="214.8" r="1.7" fill="#6e6e6e"/><path d="M374 218.2 H376.3 V225.6" fill="none" stroke="#6e6e6e" stroke-width="2.6" stroke-linecap="round" stroke-linejoin="round"/><circle cx="1556" cy="220" r="10.6" fill="none" stroke="#6e6e6e" stroke-width="2.6"/><circle cx="1556" cy="214.8" r="1.7" fill="#6e6e6e"/><path d="M1554 218.2 H1556.3 V225.6" fill="none" stroke="#6e6e6e" stroke-width="2.6" stroke-linecap="round" stroke-linejoin="round"/><circle cx="1844" cy="220" r="10.6" fill="none" stroke="#6e6e6e" stroke-width="2.6"/><circle cx="1844" cy="214.8" r="1.7" fill="#6e6e6e"/><path d="M1842 218.2 H1844.3 V225.6" fill="none" stroke="#6e6e6e" stroke-width="2.6" stroke-linecap="round" stroke-linejoin="round"/><circle cx="2234" cy="220" r="10.6" fill="none" stroke="#6e6e6e" stroke-width="2.6"/><circle cx="2234" cy="214.8" r="1.7" fill="#6e6e6e"/><path d="M2232 218.2 H2234.3 V225.6" fill="none" stroke="#6e6e6e" stroke-width="2.6" stroke-linecap="round" stroke-linejoin="round"/><g transform="translate(176 251.75)"><path d="M29.5 28.4 H18.2 A9.35 9.35 0 0 1 18.2 9.7 H28.9 A6.3 6.3 0 0 1 28.9 22.3 H18.2 A3.35 3.35 0 0 1 18.2 15.6 H27.6" fill="none" stroke="#3d72b8" stroke-width="2.9" stroke-linecap="round" stroke-linejoin="round" /></g><g transform="translate(176 307.75)"><path d="M29.5 28.4 H18.2 A9.35 9.35 0 0 1 18.2 9.7 H28.9 A6.3 6.3 0 0 1 28.9 22.3 H18.2 A3.35 3.35 0 0 1 18.2 15.6 H27.6" fill="none" stroke="#3d72b8" stroke-width="2.9" stroke-linecap="round" stroke-linejoin="round" /></g><g transform="translate(176 363.75)"><path d="M29.5 28.4 H18.2 A9.35 9.35 0 0 1 18.2 9.7 H28.9 A6.3 6.3 0 0 1 28.9 22.3 H18.2 A3.35 3.35 0 0 1 18.2 15.6 H27.6" fill="none" stroke="#3d72b8" stroke-width="2.9" stroke-linecap="round" stroke-linejoin="round" /></g><g transform="translate(176 569.75)"><path d="M29.5 28.4 H18.2 A9.35 9.35 0 0 1 18.2 9.7 H28.9 A6.3 6.3 0 0 1 28.9 22.3 H18.2 A3.35 3.35 0 0 1 18.2 15.6 H27.6" fill="none" stroke="#3d72b8" stroke-width="2.9" stroke-linecap="round" stroke-linejoin="round" /></g><g transform="translate(176 619.75)"><path d="M29.5 28.4 H18.2 A9.35 9.35 0 0 1 18.2 9.7 H28.9 A6.3 6.3 0 0 1 28.9 22.3 H18.2 A3.35 3.35 0 0 1 18.2 15.6 H27.6" fill="none" stroke="#3d72b8" stroke-width="2.9" stroke-linecap="round" stroke-linejoin="round" /></g><g transform="translate(176 769.75)"><path d="M29.5 28.4 H18.2 A9.35 9.35 0 0 1 18.2 9.7 H28.9 A6.3 6.3 0 0 1 28.9 22.3 H18.2 A3.35 3.35 0 0 1 18.2 15.6 H27.6" fill="none" stroke="#3d72b8" stroke-width="2.9" stroke-linecap="round" stroke-linejoin="round" /></g><g transform="translate(0 0)"><path d="M227.6 261.6 H248.3 V276.3 H239.4 L233.1 282 V276.3 H227.6 Z" fill="#c8d7ec" stroke="#3d72b8" stroke-width="2.8" stroke-linejoin="round"/></g><g transform="translate(296 302)"><rect x="10.6" y="18.8" width="18.9" height="15.4" rx="1.5" fill="#b6cae4" stroke="#3d72b8" stroke-width="2.8"/><path d="M13.8 18.8 V17.7 A6.1 6.1 0 0 1 26 17.7 V18.8" fill="none" stroke="#3d72b8" stroke-width="2.8"/><circle cx="19.9" cy="25.8" r="2" fill="#3d72b8"/><rect x="19" y="26" width="1.8" height="4.4" rx="0.9" fill="#3d72b8"/></g><g transform="translate(296 508)"><rect x="10.6" y="18.8" width="18.9" height="15.4" rx="1.5" fill="#b6cae4" stroke="#3d72b8" stroke-width="2.8"/><path d="M13.8 18.8 V17.7 A6.1 6.1 0 0 1 26 17.7 V18.8" fill="none" stroke="#3d72b8" stroke-width="2.8"/><circle cx="19.9" cy="25.8" r="2" fill="#3d72b8"/><rect x="19" y="26" width="1.8" height="4.4" rx="0.9" fill="#3d72b8"/></g><g transform="translate(296 564)"><rect x="10.6" y="18.8" width="18.9" height="15.4" rx="1.5" fill="#b6cae4" stroke="#3d72b8" stroke-width="2.8"/><path d="M13.8 18.8 V17.7 A6.1 6.1 0 0 1 26 17.7 V18.8" fill="none" stroke="#3d72b8" stroke-width="2.8"/><circle cx="19.9" cy="25.8" r="2" fill="#3d72b8"/><rect x="19" y="26" width="1.8" height="4.4" rx="0.9" fill="#3d72b8"/></g><g transform="translate(296 764)"><rect x="10.6" y="18.8" width="18.9" height="15.4" rx="1.5" fill="#b6cae4" stroke="#3d72b8" stroke-width="2.8"/><path d="M13.8 18.8 V17.7 A6.1 6.1 0 0 1 26 17.7 V18.8" fill="none" stroke="#3d72b8" stroke-width="2.8"/><circle cx="19.9" cy="25.8" r="2" fill="#3d72b8"/><rect x="19" y="26" width="1.8" height="4.4" rx="0.9" fill="#3d72b8"/></g><rect x="390.2" y="364.0" width="1.8" height="30" fill="#c8c8c8"/><path d="M391.5 366.8 H410.5 L406.5 374.1 L410.5 381.0 H391.5" fill="none" stroke="#c8c8c8" stroke-width="1.8" stroke-linejoin="miter"/><rect x="390.2" y="414.0" width="1.8" height="30" fill="#c8c8c8"/><path d="M391.5 416.8 H410.5 L406.5 424.1 L410.5 431.0 H391.5" fill="none" stroke="#c8c8c8" stroke-width="1.8" stroke-linejoin="miter"/><rect x="390.2" y="464.0" width="1.8" height="30" fill="#c8c8c8"/><path d="M391.5 466.8 H410.5 L406.5 474.1 L410.5 481.0 H391.5" fill="none" stroke="#c8c8c8" stroke-width="1.8" stroke-linejoin="miter"/><rect x="390.2" y="720.0" width="1.8" height="30" fill="#c8c8c8"/><path d="M391.5 722.8 H410.5 L406.5 730.1 L410.5 737.0 H391.5" fill="none" stroke="#c8c8c8" stroke-width="1.8" stroke-linejoin="miter"/><rect x="390.2" y="870.0" width="1.8" height="30" fill="#c8c8c8"/><path d="M391.5 872.8 H410.5 L406.5 880.1 L410.5 887.0 H391.5" fill="none" stroke="#c8c8c8" stroke-width="1.8" stroke-linejoin="miter"/><rect x="390.2" y="920.0" width="1.8" height="30" fill="#c8c8c8"/><path d="M391.5 922.8 H410.5 L406.5 930.1 L410.5 937.0 H391.5" fill="none" stroke="#c8c8c8" stroke-width="1.8" stroke-linejoin="miter"/><rect x="390.2" y="970.0" width="1.8" height="30" fill="#c8c8c8"/><path d="M391.5 972.8 H410.5 L406.5 980.1 L410.5 987.0 H391.5" fill="none" stroke="#c8c8c8" stroke-width="1.8" stroke-linejoin="miter"/><rect x="390.1" y="620.0" width="2" height="30" fill="#c1272d"/><path d="M392 622.0 H412 L407.8 630.1 L412 637.8 H392 Z" fill="#c1272d"/><rect x="390.1" y="670.0" width="2" height="30" fill="#c1272d"/><path d="M392 672.0 H412 L407.8 680.1 L412 687.8 H392 Z" fill="#c1272d"/><rect x="390.1" y="820.0" width="2" height="30" fill="#c1272d"/><path d="M392 822.0 H412 L407.8 830.1 L412 837.8 H392 Z" fill="#c1272d"/><rect x="472.5" y="254.5" width="23" height="23" rx="4" fill="#e2e2e2" stroke="#cfcfcf" stroke-width="1"/><rect x="478" y="264.2" width="11.6" height="3.6" rx="1.6" fill="#444"/><rect x="502.5" y="310.5" width="23" height="23" rx="4" fill="#e2e2e2" stroke="#cfcfcf" stroke-width="1"/><rect x="508" y="320.2" width="11.6" height="3.6" rx="1.6" fill="#444"/><rect x="502.5" y="516.5" width="23" height="23" rx="4" fill="#e2e2e2" stroke="#cfcfcf" stroke-width="1"/><rect x="508" y="526.2" width="11.6" height="3.6" rx="1.6" fill="#444"/><rect x="533.5" y="572.5" width="23" height="23" rx="4" fill="#e2e2e2" stroke="#cfcfcf" stroke-width="1"/><rect x="539" y="582.2" width="11.6" height="3.6" rx="1.6" fill="#444"/><rect x="533.5" y="772.5" width="23" height="23" rx="4" fill="#e2e2e2" stroke="#cfcfcf" stroke-width="1"/><rect x="539" y="782.2" width="11.6" height="3.6" rx="1.6" fill="#444"/><clipPath id="av3"><circle cx="994" cy="382.0" r="20"/></clipPath><filter id="bl3" x="-20%" y="-20%" width="140%" height="140%"><feGaussianBlur stdDeviation="0.7"/></filter><g clip-path="url(#av3)"><g filter="url(#bl3)"><circle cx="994" cy="382.0" r="20" fill="#7e8385"/><rect x="988" y="382.0" width="11" height="9" fill="#b48e76"/><path d="M973 404.0 L973 396.0 Q982 390.0 989 385.0 L995 391.0 L999 385.0 Q1006 390.0 1015 394.0 L1015 404.0 Z" fill="#cddbe6"/><ellipse cx="992.2" cy="378.0" rx="7.8" ry="9" fill="#cba287"/><path d="M982.5 377.0 Q981 365.0 991 362.5 Q1001 362.0 1000.5 374.0 Q997 369.0 989 369.5 Q985 372.0 984.5 379.0 Z" fill="#151919"/><path d="M988.5 382.5 Q992.5 385.0 996.5 382.5" fill="none" stroke="#8a5e4e" stroke-width="1.6"/></g></g><clipPath id="av4"><circle cx="994" cy="432.0" r="20"/></clipPath><filter id="bl4" x="-20%" y="-20%" width="140%" height="140%"><feGaussianBlur stdDeviation="0.7"/></filter><g clip-path="url(#av4)"><g filter="url(#bl4)"><circle cx="994" cy="432.0" r="20" fill="#87a09d"/><path d="M974 412.0 H996 L974 436.0 Z" fill="#7d97a6" opacity="0.6"/><path d="M984 434.0 Q981 424.0 986 419.0 Q994 413.0 1002 419.0 Q1008 425.0 1006 434.0 Z" fill="#3d2a1f"/><ellipse cx="993.5" cy="428.0" rx="6.5" ry="8.8" fill="#d6a18a"/><path d="M986 437.0 L999 437.0 L990 452.0 Z" fill="#c8937a"/><path d="M973 453.0 L973 444.0 Q980 438.0 986 437.0 L990 453.0 Z" fill="#b9b6b5"/><path d="M999 437.0 Q1008 440.0 1015 445.0 L1015 453.0 L990 453.0 Z" fill="#c4c1c0"/><path d="M990.5 432.5 Q993.5 434.5 996.5 432.5" fill="none" stroke="#e8c4c4" stroke-width="1.8"/></g></g><clipPath id="av5"><circle cx="994" cy="482.0" r="20"/></clipPath><filter id="bl5" x="-20%" y="-20%" width="140%" height="140%"><feGaussianBlur stdDeviation="0.7"/></filter><g clip-path="url(#av5)"><g filter="url(#bl5)"><circle cx="994" cy="482.0" r="20" fill="#7e8385"/><rect x="988" y="482.0" width="11" height="9" fill="#b48e76"/><path d="M973 504.0 L973 496.0 Q982 490.0 989 485.0 L995 491.0 L999 485.0 Q1006 490.0 1015 494.0 L1015 504.0 Z" fill="#cddbe6"/><ellipse cx="992.2" cy="478.0" rx="7.8" ry="9" fill="#cba287"/><path d="M982.5 477.0 Q981 465.0 991 462.5 Q1001 462.0 1000.5 474.0 Q997 469.0 989 469.5 Q985 472.0 984.5 479.0 Z" fill="#151919"/><path d="M988.5 482.5 Q992.5 485.0 996.5 482.5" fill="none" stroke="#8a5e4e" stroke-width="1.6"/></g></g></svg>
</body></html>
